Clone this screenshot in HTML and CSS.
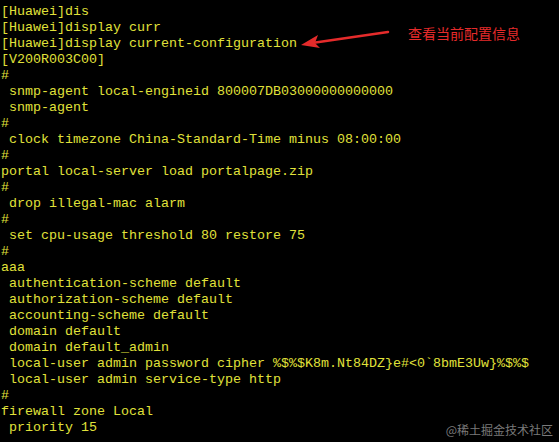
FILE: index.html
```html
<!DOCTYPE html>
<html>
<head>
<meta charset="utf-8">
<link rel="stylesheet" href="styles.css">
</head>
<body>
<div class="term">
<div class="out">
<div class="ln">[Huawei]dis</div>
<div class="ln">[Huawei]display curr</div>
<div class="ln">[Huawei]display current-configuration</div>
<div class="ln">[V200R003C00]</div>
<div class="ln">#</div>
<div class="ln"> snmp-agent local-engineid 800007DB03000000000000</div>
<div class="ln"> snmp-agent</div>
<div class="ln">#</div>
<div class="ln"> clock timezone China-Standard-Time minus 08:00:00</div>
<div class="ln">#</div>
<div class="ln">portal local-server load portalpage.zip</div>
<div class="ln">#</div>
<div class="ln"> drop illegal-mac alarm</div>
<div class="ln">#</div>
<div class="ln"> set cpu-usage threshold 80 restore 75</div>
<div class="ln">#</div>
<div class="ln">aaa</div>
<div class="ln"> authentication-scheme default</div>
<div class="ln"> authorization-scheme default</div>
<div class="ln"> accounting-scheme default</div>
<div class="ln"> domain default</div>
<div class="ln"> domain default_admin</div>
<div class="ln"> local-user admin password cipher %$%$K8m.Nt84DZ}e#&lt;0`8bmE3Uw}%$%$</div>
<div class="ln"> local-user admin service-type http</div>
<div class="ln">#</div>
<div class="ln">firewall zone Local</div>
<div class="ln"> priority 15</div>
</div>
<div class="note">
<svg class="arrow" width="90" height="20" viewBox="0 0 90 20">
<line x1="88" y1="3" x2="12" y2="14" stroke="#e52b2b" stroke-width="2.5" stroke-linecap="round"/>
<polygon points="1,16 18,6 15,14 20,19" fill="#e52b2b"/>
</svg>
<span class="label">查看当前配置信息</span>
</div>
<div class="mark">@稀土掘金技术社区</div>
</div>
</body>
</html>
```
FILE: styles.css
```css
html, body {
  margin: 0;
  padding: 0;
  background: #000;
}
.term {
  position: relative;
  width: 559px;
  height: 442px;
  overflow: hidden;
  background: #000;
}
.out {
  display: flex;
  flex-direction: column;
  align-items: flex-start;
  padding: 4px 0 0 1px;
  font-family: "Liberation Mono", "Courier New", monospace;
  font-size: 13.33px;
  line-height: 16px;
  color: #e0e23a;
}
.ln {
  white-space: pre;
  height: 16px;
}
.note {
  position: absolute;
  left: 300px;
  top: 25px;
  display: flex;
  align-items: flex-start;
  gap: 18px;
}
.arrow {
  display: block;
  margin-top: 4px;
}
.label {
  font-family: "Noto Sans CJK SC", sans-serif;
  font-size: 14px;
  line-height: 16px;
  color: #e52b2b;
}
.mark {
  position: absolute;
  right: 6px;
  bottom: 4px;
  font-family: "Noto Sans CJK SC", sans-serif;
  font-size: 12px;
  line-height: 16px;
  color: #7a7a7a;
}
```
